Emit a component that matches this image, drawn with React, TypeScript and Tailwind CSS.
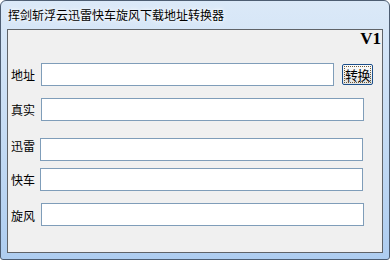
import React, { useState } from 'react';

const cjk = '"Noto Sans CJK SC", "DejaVu Sans", sans-serif';

type FieldProps = {
  label: string;
  value: string;
  onChange: (v: string) => void;
  labelClass: string;
  inputClass: string;
  children?: React.ReactNode;
};

const Field: React.FC<FieldProps> = ({ label, value, onChange, labelClass, inputClass, children }) => (
  <div className="flex items-center">
    <span className={`shrink-0 pl-[3px] text-[12px] leading-[14px] text-black ${labelClass}`}>{label}</span>
    <input
      value={value}
      onChange={(e) => onChange(e.target.value)}
      className={`h-[23px] shrink-0 border border-[#7f9db9] bg-white px-1 text-[12px] outline-none ${inputClass}`}
    />
    {children}
  </div>
);

const App: React.FC = () => {
  const [url, setUrl] = useState('');
  const [real, setReal] = useState('');
  const [thunder, setThunder] = useState('');
  const [flashget, setFlashget] = useState('');
  const [qqdl, setQqdl] = useState('');

  return (
    <div className="h-[260px] w-[390px] bg-white" style={{ fontFamily: cjk }}>
      <div className="flex h-[260px] w-[390px] flex-col rounded-t-[6px] rounded-b-[3px] border border-[#4d5d72] bg-gradient-to-b from-[#dbe9f8] via-[#c6dcf4] to-[#aecdf0]">
        {/* title bar */}
        <div className="flex h-[28px] shrink-0 items-center pl-[7px] pb-[1px]">
          <span className="text-[12px] leading-[14px] text-black [text-shadow:0_0_6px_#fff,0_0_3px_#fff]">
            挥剑斩浮云迅雷快车旋风下载地址转换器
          </span>
        </div>

        {/* client area */}
        <div className="mx-[6px] flex h-[224px] w-[376px] shrink-0 flex-col border border-[#5f6368] bg-[#f0f0f0]">
          <div className="flex h-[18px] justify-end pr-[1px]">
            <span
              className="text-[17px] font-bold leading-[18px] text-black"
              style={{ fontFamily: '"Liberation Serif", "DejaVu Serif", serif' }}
            >
              V1
            </span>
          </div>

          <div className="mt-[15px]">
            <Field label="地址" value={url} onChange={setUrl} labelClass="w-[33px]" inputClass="w-[293px]">
              <button className="ml-[8px] flex h-[21px] w-[31px] shrink-0 items-center justify-center rounded-[2px] border border-[#1c4f8a] bg-gradient-to-b from-[#fbfbfb] to-[#e3e3e3] p-[1px]">
                <span className="flex h-full w-full items-center justify-center whitespace-nowrap border border-dotted border-[#6a5a3a] text-[13px] leading-[14px] tracking-[-0.5px] text-black">
                  转换
                </span>
              </button>
            </Field>
          </div>

          <div className="mt-[12px]">
            <Field label="真实" value={real} onChange={setReal} labelClass="w-[33px]" inputClass="w-[323px]" />
          </div>

          <div className="mt-[17px]">
            <Field label="迅雷" value={thunder} onChange={setThunder} labelClass="mb-[8px] w-[32px]" inputClass="w-[323px]" />
          </div>

          <div className="mt-[7px]">
            <Field label="快车" value={flashget} onChange={setFlashget} labelClass="w-[32px]" inputClass="w-[323px]" />
          </div>

          <div className="mt-[12px]">
            <Field label="旋风" value={qqdl} onChange={setQqdl} labelClass="mt-[2px] w-[33px]" inputClass="w-[323px]" />
          </div>
        </div>
      </div>
    </div>
  );
};

export default App;
